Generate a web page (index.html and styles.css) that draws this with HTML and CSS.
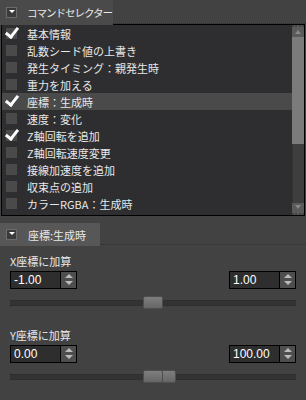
FILE: index.html
```html
<!DOCTYPE html>
<html lang="ja">

<head>
    <meta charset="UTF-8">
    <title>コマンドセレクター</title>
    <link rel="stylesheet" href="styles.css">
</head>

<body>
    <div class="tabbar">
        <div class="tab">
            <span class="tab-icon"></span>
            <span class="tab-label">コマンドセレクター</span>
        </div>
        <div class="tab-rest"></div>
    </div>

    <div class="list">
        <ul class="rows">
            <li class="row"><span class="check on"></span>基本情報</li>
            <li class="row"><span class="check"></span>乱数シード値の上書き</li>
            <li class="row"><span class="check"></span>発生タイミング：親発生時</li>
            <li class="row"><span class="check"></span>重力を加える</li>
            <li class="row selected"><span class="check on"></span>座標：生成時</li>
            <li class="row"><span class="check"></span>速度：変化</li>
            <li class="row"><span class="check on"></span>Z軸回転を追加</li>
            <li class="row"><span class="check"></span>Z軸回転速度変更</li>
            <li class="row"><span class="check"></span>接線加速度を追加</li>
            <li class="row"><span class="check"></span>収束点の追加</li>
            <li class="row"><span class="check"></span>カラーRGBA：生成時</li>
            <li class="row"><span class="check"></span></li>
        </ul>
        <div class="scrollbar">
            <div class="scroll-btn up"></div>
            <div class="scroll-thumb"></div>
            <div class="scroll-track"></div>
            <div class="scroll-btn down"></div>
        </div>
    </div>

    <div class="tabbar second">
        <div class="tab">
            <span class="tab-icon"></span>
            <span class="tab-label">座標:生成時</span>
        </div>
        <div class="tab-rest"></div>
    </div>

    <div class="panel">
        <div class="group">
            <div class="group-label">X座標に加算</div>
            <div class="inputs">
                <div class="spin"><span class="spin-value">-1.00</span><span class="spin-arrows"></span></div>
                <div class="spin"><span class="spin-value">1.00</span><span class="spin-arrows"></span></div>
            </div>
            <div class="slider">
                <div class="track"></div>
                <div class="thumb" style="left: 133px"></div>
            </div>
        </div>

        <div class="group">
            <div class="group-label">Y座標に加算</div>
            <div class="inputs">
                <div class="spin"><span class="spin-value">0.00</span><span class="spin-arrows"></span></div>
                <div class="spin"><span class="spin-value">100.00</span><span class="spin-arrows"></span></div>
            </div>
            <div class="slider">
                <div class="track"></div>
                <div class="thumb small" style="left: 143px"></div>
                <div class="thumb" style="left: 133px"></div>
            </div>
        </div>
    </div>
</body>

</html>
```

FILE: styles.css
```css
body {
    margin: 0;
    width: 306px;
    height: 400px;
    overflow: hidden;
    background-color: #424242;
    color: #e8e8e8;
    font-family: "Noto Sans CJK JP", "Liberation Sans", sans-serif;
    font-size: 11px;
}

.tabbar {
    display: flex;
    height: 25px;
}

.tab {
    width: 113px;
    display: flex;
    align-items: center;
    background-color: #4a4a4a;
    padding-left: 6px;
    box-sizing: border-box;
    white-space: nowrap;
}

.tab-icon {
    position: relative;
    flex: none;
    width: 11px;
    height: 11px;
    box-sizing: border-box;
    background-color: #3a3a3a;
    border: 1px solid #6c6c6c;
    margin-right: 10px;
}

.tab-icon::after {
    content: "";
    position: absolute;
    left: 2px;
    top: 2px;
    border-left: 3px solid transparent;
    border-right: 3px solid transparent;
    border-top: 3px solid #fff;
}

.tab-label {
    line-height: 14px;
    font-size: 10.5px;
    letter-spacing: -1px;
}

.tab-rest {
    flex: 1;
    border-bottom: 1px dotted #2e2e2e;
    margin-bottom: 1px;
}

.second {
    height: 23px;
    margin-top: 7px;
}

.second .tab {
    width: 100px;
    background-color: #575757;
    padding-left: 6px;
}

.second .tab-label {
    margin-left: 1px;
    font-size: 11px;
    letter-spacing: 0;
}

.list {
    display: flex;
    height: 190px;
    margin: 0 1px 0 1px;
    border: 1px solid #000;
    background-color: #2e2e30;
    margin-top: -1px;
}

.rows {
    flex: 1;
    margin: 0;
    padding: 0;
    list-style: none;
    overflow: hidden;
}

.row {
    display: flex;
    align-items: center;
    height: 17px;
    padding-left: 4px;
    line-height: 14px;
    white-space: nowrap;
}

.row.selected {
    background-color: #4a4a4a;
}

.check {
    position: relative;
    flex: none;
    width: 11px;
    height: 11px;
    margin-right: 10px;
    background-color: #4a4a4a;
    background-image: radial-gradient(#3c3c3c 35%, transparent 40%);
    background-size: 2px 2px;
}

.check.on::after {
    content: "";
    position: absolute;
    left: 2px;
    top: -3px;
    width: 5px;
    height: 10px;
    border-right: 3px solid #fff;
    border-bottom: 3px solid #fff;
    transform: rotate(38deg);
}

.scrollbar {
    width: 12px;
    display: flex;
    flex-direction: column;
}

.scroll-btn {
    position: relative;
    height: 12px;
    background-color: #5a5a5a;
}

.scroll-btn.up {
    border-top: 2px dotted #444;
    height: 10px;
}

.scroll-btn.down {
    border-bottom: 2px dotted #444;
    height: 10px;
}

.scroll-btn::after {
    content: "";
    position: absolute;
    left: 3px;
    border-left: 3px solid transparent;
    border-right: 3px solid transparent;
}

.scroll-btn.up::after {
    top: 3px;
    border-bottom: 4px solid #888;
}

.scroll-btn.down::after {
    top: 2px;
    border-top: 4px solid #888;
}

.scroll-thumb {
    height: 107px;
    background-color: #7b7b7b;
}

.scroll-track {
    flex: 1;
    background-color: #3e3e3e;
    border-left: 1px dotted #2a2a2a;
}

.panel {
    padding: 0 10px;
}

.group {
    margin-top: 8px;
}

.group + .group {
    margin-top: 19px;
}

.group-label {
    line-height: 14px;
    margin-bottom: 3px;
}

.inputs {
    display: flex;
    justify-content: space-between;
}

.spin {
    display: flex;
    height: 18px;
    border: 1px solid #000;
    box-sizing: border-box;
}

.spin-value {
    width: 50px;
    padding-left: 3px;
    box-sizing: border-box;
    background-color: #2e2e2e;
    color: #fff;
    font-family: "Liberation Sans", sans-serif;
    font-size: 12px;
    line-height: 16px;
    border-right: 1px solid #000;
}

.spin-arrows {
    position: relative;
    width: 15px;
    background-color: #4e4e4e;
}

.spin-arrows::before,
.spin-arrows::after {
    content: "";
    position: absolute;
    left: 4px;
    border-left: 4px solid transparent;
    border-right: 4px solid transparent;
}

.spin-arrows::before {
    top: 2px;
    border-bottom: 4px solid #bbb;
}

.spin-arrows::after {
    top: 9px;
    border-top: 4px solid #bbb;
}

.slider {
    position: relative;
    height: 13px;
    margin-top: 7px;
    display: flex;
    align-items: center;
}

.track {
    flex: 1;
    height: 4px;
    background-color: #333;
    border-top: 1px dotted #2a2a2a;
    border-bottom: 1px dotted #2a2a2a;
}

.thumb {
    position: absolute;
    top: 0;
    width: 20px;
    height: 13px;
    box-sizing: border-box;
    border: 1px solid #4e4e4e;
    border-radius: 2px;
    background: linear-gradient(#7e7e7e, #666);
}

.thumb.small {
    width: 23px;
}
```
